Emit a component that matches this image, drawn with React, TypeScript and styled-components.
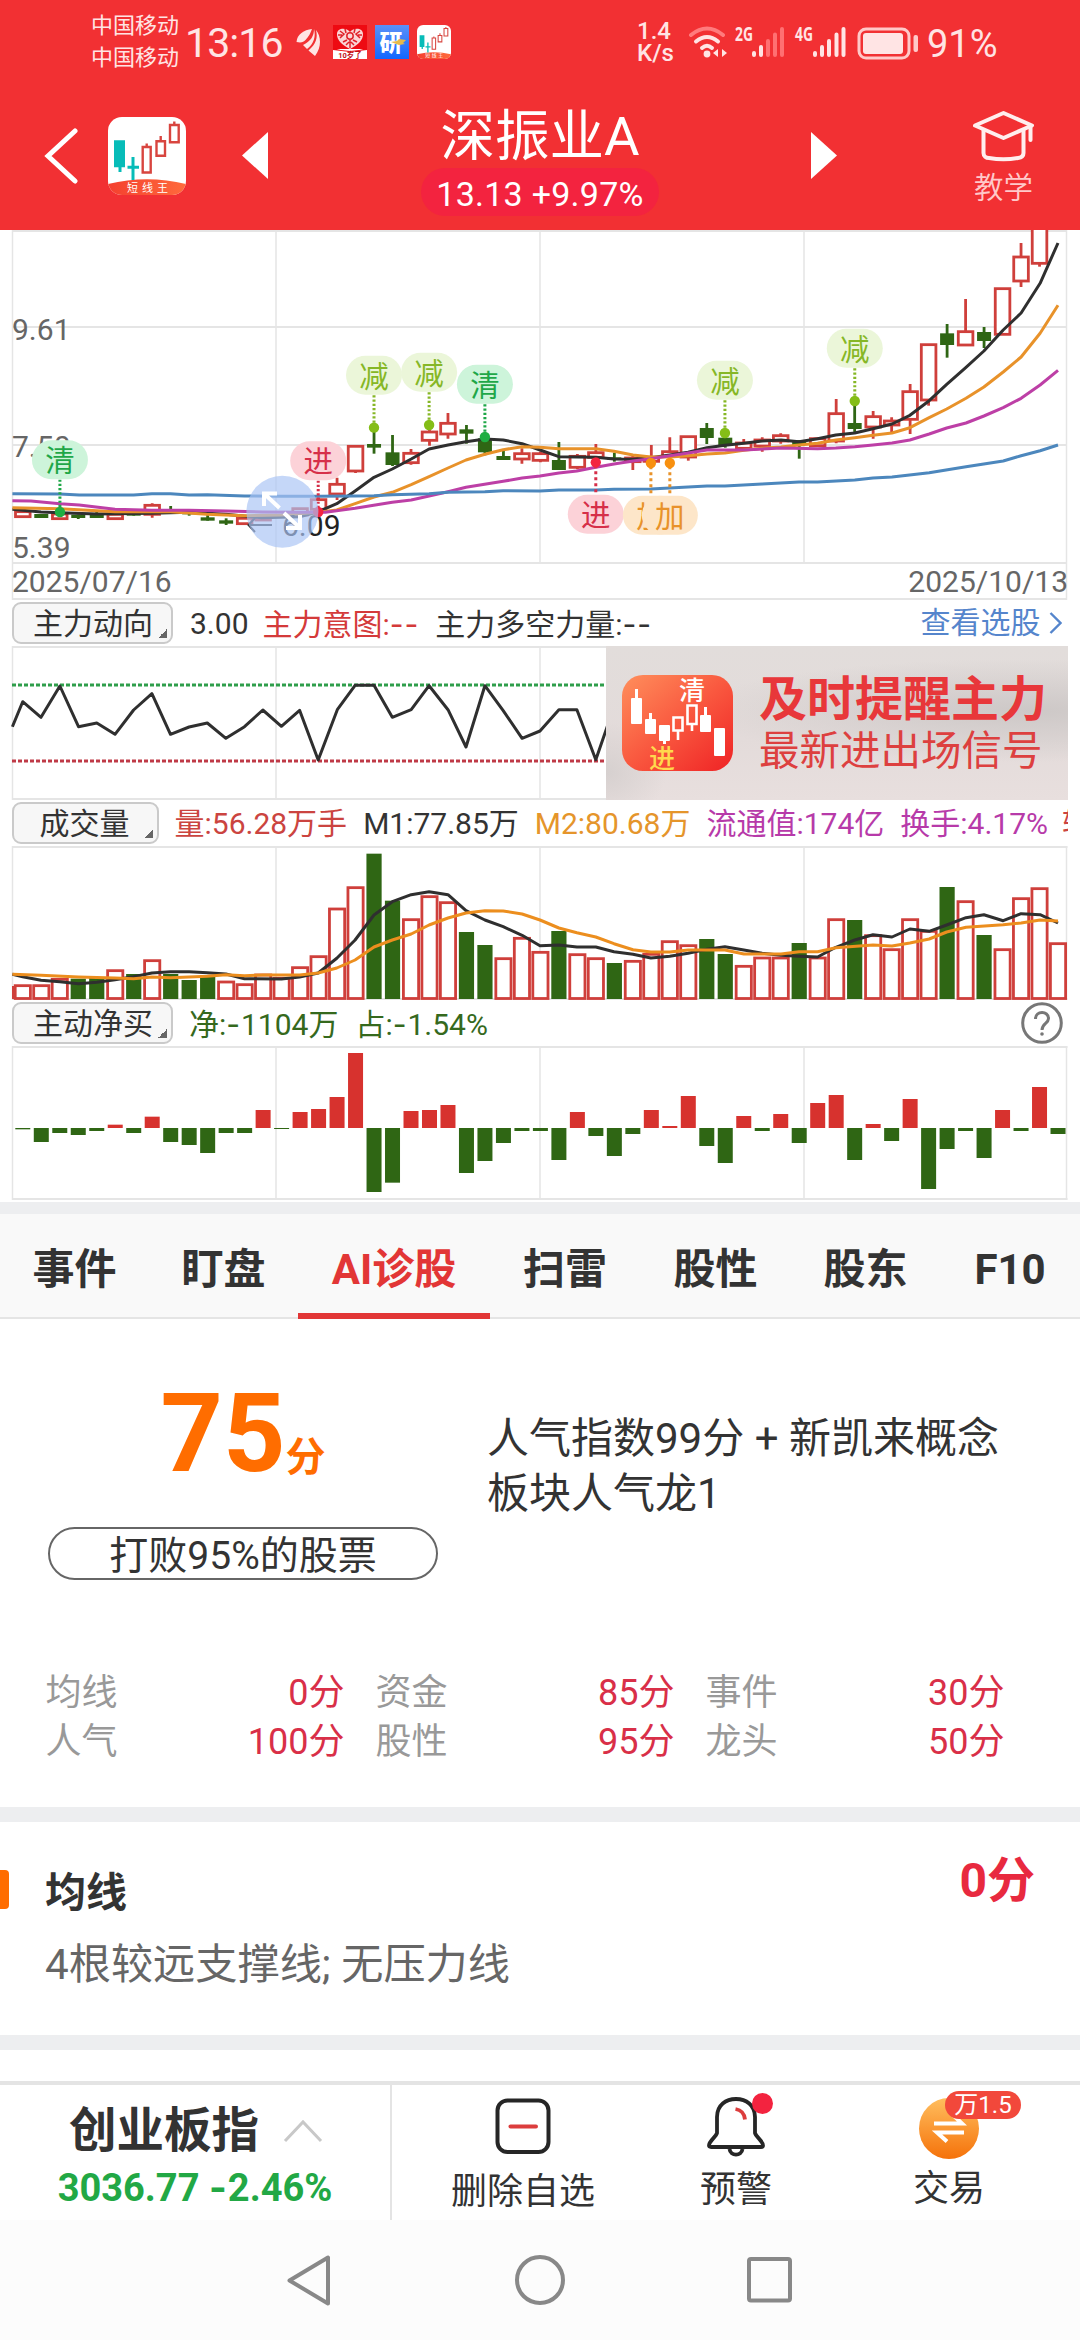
import React from 'react';
import styled, { createGlobalStyle } from 'styled-components';

const FONT = `Roboto, "Noto Sans CJK SC", sans-serif`;
const RED = '#d7322e';
const HOLLOW = '#cf3f3b';
const GREEN = '#2f6614';
const INK = '#333333';
const GRID = '#e5e5e5';

const GlobalStyle = createGlobalStyle`
  * { box-sizing: border-box; }
  html, body { margin: 0; padding: 0; background: #fff; }
  body { font-family: ${FONT}; color: ${INK}; width: 1080px; }
  svg { display: block; flex: none; }
`;

/* ---------- scales ---------- */

const sx = (v: number) => v / 2.9037;
const barX = (i: number) => 22.8 + i * 18.486;
const shift = (offset: number) => (v: number) => v / 3 - offset;
const priceY = shift(5);
const flowY = shift(56);
const volumeY = shift(256);

type Pt = [number, number];
const toPoints = (pts: Pt[], y: (v: number) => number) =>
  pts.map(([a, b]) => `${sx(a).toFixed(1)},${y(b).toFixed(1)}`).join(' ');

/* ---------- data ---------- */

// [colour, wick top, body top, body bottom, wick bottom]
type Candle = ['r' | 'g', number, number, number, number];
const candles: Candle[] = [
  ['r', 860, 860, 875, 875], ['g', 867, 867, 879, 879], ['r', 867, 867, 881, 881], ['g', 869, 869, 879, 882],
  ['g', 858, 866, 879, 879], ['r', 868, 868, 881, 881], ['g', 864, 864, 872, 872], ['r', 835, 841, 868, 878],
  ['g', 843, 857, 862, 862], ['g', 862, 862, 868, 872], ['g', 868, 877, 887, 887], ['g', 880, 886, 896, 900],
  ['r', 880, 880, 896, 896], ['r', 875, 875, 885, 885], ['g', 868, 870, 878, 878], ['r', 850, 851, 870, 870],
  ['r', 818, 824, 853, 862], ['r', 758, 778, 807, 825], ['r', 664, 664, 738, 744], ['g', 620, 657, 668, 686],
  ['g', 630, 682, 720, 723], ['r', 672, 685, 713, 719], ['r', 610, 621, 646, 662], ['r', 564, 595, 627, 641],
  ['g', 600, 613, 626, 656], ['g', 632, 640, 682, 691], ['g', 678, 693, 705, 705], ['r', 670, 686, 702, 716],
  ['r', 680, 686, 706, 712], ['g', 651, 705, 735, 735], ['r', 687, 694, 727, 733], ['r', 657, 683, 697, 705],
  ['g', 683, 697, 705, 710], ['r', 692, 699, 710, 735], ['r', 660, 697, 709, 712], ['r', 637, 680, 694, 700],
  ['r', 635, 635, 696, 707], ['g', 594, 609, 639, 657], ['g', 630, 638, 663, 668], ['r', 642, 654, 670, 675],
  ['r', 637, 645, 663, 680], ['r', 625, 632, 648, 656], ['g', 646, 646, 660, 701], ['r', 637, 641, 662, 662],
  ['r', 522, 566, 648, 655], ['g', 540, 594, 612, 621], ['r', 558, 575, 606, 641], ['r', 577, 588, 600, 622],
  ['r', 477, 500, 583, 627], ['r', 359, 359, 525, 542], ['g', 297, 325, 360, 398], ['r', 222, 320, 360, 360],
  ['g', 306, 321, 348, 369], ['r', 191, 191, 328, 328], ['r', 54, 96, 168, 186], ['r', -20, -20, 115, 125],
];

const ma5: Pt[] = [[36, 853], [119, 861], [174, 863], [281, 867], [441, 865], [549, 862], [656, 868], [760, 878], [870, 875], [924, 860], [978, 836], [1031, 798], [1086, 757], [1139, 732], [1194, 702], [1246, 672], [1301, 660], [1353, 650], [1408, 642], [1461, 645], [1516, 656], [1568, 675], [1623, 695], [1730, 697], [1783, 702], [1838, 703], [1890, 698], [1945, 690], [1998, 682], [2053, 668], [2105, 661], [2160, 655], [2213, 648], [2268, 645], [2320, 650], [2374, 641], [2427, 630], [2482, 624], [2535, 611], [2590, 597], [2642, 571], [2698, 527], [2749, 478], [2805, 427], [2857, 378], [2913, 315], [2965, 264], [3020, 175], [3072, 54]];
const ma10: Pt[] = [[36, 848], [174, 851], [334, 860], [495, 860], [600, 868], [710, 872], [817, 870], [924, 862], [978, 855], [1031, 836], [1086, 816], [1139, 802], [1194, 779], [1246, 755], [1301, 729], [1353, 705], [1408, 688], [1461, 674], [1516, 665], [1568, 667], [1623, 671], [1730, 671], [1783, 679], [1838, 690], [1890, 696], [1945, 696], [1998, 692], [2053, 687], [2105, 684], [2160, 676], [2213, 670], [2268, 666], [2320, 660], [2374, 655], [2427, 645], [2482, 638], [2535, 631], [2590, 624], [2642, 608], [2698, 578], [2749, 552], [2805, 520], [2857, 486], [2913, 441], [2965, 396], [3020, 325], [3072, 241]];
const ma20: Pt[] = [[36, 827], [90, 828], [174, 836], [230, 840], [334, 853], [441, 856], [549, 856], [656, 858], [763, 861], [870, 862], [945, 862], [1031, 850], [1139, 832], [1194, 825], [1246, 813], [1301, 800], [1353, 787], [1461, 769], [1516, 759], [1568, 753], [1623, 744], [1675, 738], [1730, 727], [1783, 717], [1838, 708], [1890, 701], [1945, 692], [1998, 684], [2053, 675], [2160, 675], [2268, 669], [2374, 671], [2427, 669], [2482, 665], [2535, 660], [2590, 654], [2642, 645], [2698, 627], [2749, 609], [2805, 594], [2857, 573], [2913, 548], [2965, 520], [3020, 480], [3072, 436]];
const ma60: Pt[] = [[36, 806], [174, 807], [230, 810], [388, 810], [441, 806], [495, 806], [549, 810], [602, 809], [710, 813], [817, 814], [924, 814], [1031, 813], [1086, 812], [1139, 809], [1246, 806], [1301, 802], [1408, 800], [1461, 797], [1568, 798], [1623, 795], [1730, 795], [1783, 793], [1890, 792], [1998, 786], [2053, 783], [2105, 783], [2213, 777], [2320, 771], [2374, 771], [2482, 765], [2535, 759], [2590, 756], [2698, 743], [2805, 725], [2913, 708], [2965, 692], [3020, 677], [3072, 660]];

const mainForce: Pt[] = [[36, 410], [66, 335], [119, 382], [174, 288], [228, 410], [281, 399], [334, 433], [388, 360], [441, 311], [495, 433], [549, 411], [602, 399], [656, 445], [710, 410], [763, 360], [817, 409], [870, 361], [924, 510], [980, 358], [1031, 286], [1086, 286], [1139, 382], [1194, 359], [1246, 287], [1301, 359], [1353, 471], [1408, 287], [1461, 362], [1516, 445], [1568, 423], [1623, 359], [1675, 359], [1730, 509], [1775, 374]];

const volumes = 'r1187 r1187 r1168 g1166 g1163 r1142 g1152 r1112 g1152 g1170 g1160 r1176 r1184 r1155 r1165 r1133 r1100 r957 r893 g791 g932 r989 r920 r938 g1026 g1065 r1106 r1045 r1087 g1023 r1094 r1106 g1119 r1114 r1093 r1055 r1067 g1047 g1092 r1129 r1104 r1104 g1059 r1104 r989 g990 r1037 r1079 r989 r1024 g891 r935 g1035 r1079 r926 r896 r1061'
  .split(' ').map((s) => ({ up: s[0] === 'r', top: Number(s.slice(1)) }));

const volMa5: Pt[] = [[36, 1153], [66, 1160], [119, 1171], [174, 1175], [228, 1181], [281, 1177], [334, 1169], [388, 1160], [441, 1149], [495, 1145], [549, 1145], [602, 1148], [656, 1152], [710, 1166], [817, 1167], [870, 1161], [924, 1149], [978, 1105], [1031, 1050], [1086, 975], [1139, 935], [1194, 914], [1246, 905], [1301, 914], [1353, 962], [1408, 990], [1461, 1010], [1516, 1036], [1568, 1067], [1623, 1065], [1675, 1071], [1730, 1071], [1783, 1085], [1838, 1093], [1890, 1104], [1945, 1099], [1998, 1090], [2053, 1078], [2105, 1070], [2160, 1080], [2213, 1090], [2268, 1096], [2320, 1099], [2374, 1101], [2427, 1072], [2482, 1050], [2535, 1034], [2590, 1041], [2642, 1017], [2698, 1024], [2749, 1005], [2805, 983], [2857, 974], [2913, 992], [2965, 971], [3020, 974], [3072, 999]];
const volMa10: Pt[] = [[36, 1153], [119, 1156], [228, 1161], [334, 1164], [388, 1166], [441, 1161], [495, 1163], [602, 1159], [656, 1154], [710, 1157], [763, 1155], [870, 1155], [924, 1149], [978, 1134], [1031, 1110], [1086, 1071], [1139, 1050], [1194, 1032], [1246, 1005], [1301, 984], [1353, 969], [1408, 962], [1461, 963], [1516, 972], [1568, 990], [1623, 1014], [1675, 1028], [1730, 1041], [1783, 1061], [1838, 1079], [1890, 1086], [1945, 1086], [1998, 1080], [2105, 1080], [2160, 1092], [2268, 1092], [2320, 1085], [2374, 1085], [2427, 1073], [2535, 1065], [2590, 1068], [2642, 1059], [2698, 1047], [2749, 1026], [2805, 1012], [2913, 1004], [2965, 999], [3020, 990], [3072, 993]];

const netFlows = [418, 456, 429, 435, 423, 404, 429, 380, 456, 465, 489, 429, 429, 360, 417, 366, 357, 321, 189, 606, 578, 363, 360, 345, 549, 513, 459, 423, 423, 510, 366, 438, 498, 432, 360, 408, 318, 468, 519, 378, 423, 372, 459, 339, 315, 510, 402, 453, 327, 597, 477, 423, 504, 360, 423, 291, 432];

type Tone = 'exit' | 'trim' | 'enter' | 'add';
const tones: Record<Tone, { bg: string; fg: string; dot: string }> = {
  exit: { bg: '#cdf4da', fg: '#1fa748', dot: '#1fae42' },
  trim: { bg: '#ebf6d9', fg: '#86b726', dot: '#84bd17' },
  enter: { bg: '#fcd2d8', fg: '#d62f49', dot: '#f3243f' },
  add: { bg: '#fde6c9', fg: '#e8922a', dot: '#f8900f' },
};
const signals: { x: number; pill: number; dot: number; label: string; tone: Tone }[] = [
  { x: 174, pill: 704, dot: 861, label: '清', tone: 'exit' },
  { x: 1086, pill: 451, dot: 608, label: '减', tone: 'trim' },
  { x: 1246, pill: 442, dot: 600, label: '减', tone: 'trim' },
  { x: 1408, pill: 478, dot: 636, label: '清', tone: 'exit' },
  { x: 924, pill: 707, dot: 861, label: '进', tone: 'enter' },
  { x: 2105, pill: 466, dot: 624, label: '减', tone: 'trim' },
  { x: 2482, pill: 370, dot: 528, label: '减', tone: 'trim' },
  { x: 1730, pill: 868, dot: 712, label: '进', tone: 'enter' },
  { x: 1890, pill: 871, dot: 714, label: '加', tone: 'add' },
  { x: 1945, pill: 871, dot: 714, label: '加', tone: 'add' },
];

/* ---------- shared bits ---------- */

const Page = styled.main`
  width: 1080px;
  height: 2340px;
  display: flex;
  flex-direction: column;
  background: #fff;
  overflow: hidden;
`;

const DashMark = styled.span`
  font-family: Inter, ${FONT};
  letter-spacing: 0.03em;
`;

const Dashed = ({ text }: { text: string }) => (
  <>
    {text.split(/(-)/).map((part, i) => (part === '-' ? <DashMark key={i}>-</DashMark> : part))}
  </>
);

const AppLogo = ({ size }: { size: number }) => (
  <svg width={size} height={size} viewBox="0 0 78 78">
    <defs>
      <clipPath id={`logo${size}`}><rect width="78" height="78" rx="14" /></clipPath>
      <linearGradient id={`band${size}`}><stop offset="0" stopColor="#f4402f" /><stop offset="1" stopColor="#ff6a3c" /></linearGradient>
    </defs>
    <g clipPath={`url(#logo${size})`}>
      <rect width="78" height="78" fill="#fff" />
      <path d="M0 67 Q39 57.5 78 67 V78 H0Z" fill={`url(#band${size})`} />
      <path d="M6 23.3h11v27h-3.5v4.7h-3v-4.7H6zM23.5 40h3v8.8H31v3h-4.500V63h-3V51.800h-4v-3h4z" fill="#07bcb8" />
      <g fill="none" stroke="#d8453f" strokeWidth="2.4">
        <path d="M34.700 30h8v25.500h-8zM38.700 26.500v3.500M48.500 24.200h8.500v14.500h-8.500zM52.700 19v5M62 8h8.700v17.200H62zM66.300 4.500V8" />
      </g>
      <text x="39.500" y="74.500" fontSize="11" fill="#fff" textAnchor="middle" letterSpacing="4" fontFamily={FONT} dx="2">短线王</text>
    </g>
  </svg>
);

/* ---------- header ---------- */

const Header = styled.header`
  flex: none;
  height: 230px;
  background: #f23033;
  color: #fff;
`;

const StatusBar = styled.div`
  height: 84px;
  padding: 0 0 0 91px;
  display: flex;
  align-items: center;
  color: #ffe4e4;
`;

const Carriers = styled.div`
  font-size: 22px;
  line-height: 32px;
  width: 94px;
  white-space: nowrap;
`;

const Clock = styled.div`
  font-size: 41px;
  letter-spacing: -0.9px;
  line-height: 48px;
  width: 111px;
  padding-top: 2px;
`;

const AppTray = styled.div`
  display: flex;
  align-items: center;
  gap: 8px;
  margin-left: 11px;
`;

const Spacer = styled.div`
  flex: 1;
`;

const NetSpeed = styled.div`
  width: 51px;
  font-size: 24px;
  line-height: 22px;
  font-weight: 500;
`;

const BatteryText = styled.div`
  width: 154px;
  padding-left: 1px;
  font-size: 38px;
  line-height: 46px;
  padding-top: 3px;
`;

const StatusIcons = () => (
  <svg width="238" height="40" viewBox="688 20 238 40" fill="none" stroke="#ffe4e4" fontFamily={`"Open Sans", sans-serif`}>
    <g strokeWidth="4" strokeLinecap="round">
      <path d="M691 33 Q707 20 723 33" stroke="#ff7b7d" />
      <path d="M696 39.500 Q707 30.500 718 39.500M702 46 Q707 41.500 712 46" />
    </g>
    <circle cx="707" cy="52" r="3.400" fill="#ffe4e4" stroke="none" />
    <path d="M713 51l5-4v8zM727 51l-5-4v8z" fill="#ffe4e4" stroke="none" />
    <g strokeWidth="4" strokeLinecap="round">
      <path d="M754 51v2M761 45v8" />
      <path d="M768 39v14M775 32.500v20.500M782 27v26" stroke="#ff7072" />
      <path d="M815 51v2M822 45v8M829 39v14M836.500 32.500v20.500M843.500 27v26" />
    </g>
    <g fill="#ffe4e4" stroke="none" fontSize="19" fontWeight="700">
      <text x="735" y="39" textLength="18" lengthAdjust="spacingAndGlyphs">2G</text>
      <text x="795" y="39" textLength="18" lengthAdjust="spacingAndGlyphs">4G</text>
    </g>
    <rect x="859" y="27" width="50" height="29" rx="7" strokeWidth="3" stroke="#ffc9c9" />
    <rect x="863" y="31" width="40" height="21" rx="3" fill="#ffe4e4" stroke="none" />
    <rect x="913.500" y="33" width="4.500" height="17" rx="2" fill="#ffc9c9" stroke="none" />
  </svg>
);

const HuaweiMark = () => (
  <svg width="26" height="30" viewBox="0 0 26 30" fill="#ffe4e4">
    <path d="M16 2C8 3 1 7 .5 15c5 1 7 0 9-2 3-3 5-7 6.500-11z" />
    <path d="M18 2c0 7-3 12-11 16l4 4C18 17 20 9 18 2z" />
    <path d="M20 3c2 8 0 14-7.500 20.500L19 29C26 20 25 9 20 3z" />
  </svg>
);

const BadgeHeart = () => (
  <svg width="34" height="34" viewBox="0 0 34 34">
    <rect width="34" height="34" fill="#ee0a12" />
    <rect y="24" width="34" height="10" fill="#fff" />
    <path d="M0 23Q17 29 34 23V25L17 27L0 25z" fill="#ee0a12" />
    <path d="M17 24C8 19 4 15 4 9c0-6 9-7 13-2 4-5 13-4 13 2 0 6-4 10-13 15z" fill="#fbd5d5" />
    <g stroke="#e0222a" strokeWidth="1.500" fill="none">
      <circle cx="17" cy="11" r="3.200" />
      <path d="M7 6l4 3-4 4M27 6l-4 3 4 4M10 17l4-2M24 17l-4-2M12 4l1 4M22 4l-1 4M17 15v8M13 20l3-3M21 20l-3-3M5 10h4M25 10h4" />
    </g>
    <text x="17" y="32.500" fontSize="7.500" fontWeight="700" fill="#c01018" textAnchor="middle" fontFamily={FONT}>10岁了</text>
  </svg>
);

const BadgeResearch = () => (
  <svg width="34" height="34" viewBox="0 0 34 34">
    <defs><linearGradient id="blue" x2="0" y2="1"><stop offset="0" stopColor="#5b90f8" /><stop offset="1" stopColor="#1167ff" /></linearGradient></defs>
    <rect width="34" height="34" fill="url(#blue)" />
    <text x="16" y="25.500" fontSize="23" fontWeight="900" fill="#fff" textAnchor="middle" fontFamily={FONT}>研</text>
    <path d="M16 17l6-1 2-2 7 1-3 3 2 1-6 1z" fill="#e5b94a" />
  </svg>
);

const NavRow = styled.div`
  height: 146px;
  display: grid;
  grid-template-columns: 108px 134px 26px 153px 238px 152px 26px 136px 61px 46px;
  align-items: start;
`;

const BackCell = styled.div`
  padding: 44px 0 0 44px;
`;
const LogoCell = styled.div`
  padding-top: 33px;
`;
const ArrowCell = styled.div`
  grid-column: ${(p: { $col: number }) => p.$col};
  padding-top: 48px;
`;

const TitleCell = styled.div`
  grid-column: 5;
  display: flex;
  flex-direction: column;
  align-items: center;
  padding-top: 20px;
`;

const StockName = styled.h1`
  margin: 0;
  font-size: 54.5px;
  font-weight: 400;
  line-height: 64px;
  white-space: nowrap;
`;

const Quote = styled.div`
  width: 238px;
  height: 48px;
  border-radius: 24px;
  background: #f3233f;
  font-size: 34px;
  letter-spacing: 0.25px;
  line-height: 53px;
  text-align: center;
  white-space: nowrap;
`;

const LearnCell = styled.div`
  grid-column: 9;
  padding-top: 26px;
  display: flex;
  flex-direction: column;
  align-items: center;
  font-size: 29.5px;
  font-weight: 350;
  line-height: 36px;
  gap: 8px;
  color: #ffc9ca;
  white-space: nowrap;
`;

/* ---------- charts ---------- */

const ChartArea = styled.section`
  flex: none;
  height: 972px;
  display: flex;
  flex-direction: column;
`;

const PanelRow = styled.div`
  display: flex;
  height: 154px;
`;

const IndicatorRow = styled.div`
  height: 46px;
  width: 1067.5px;
  padding: 2px 0 2px 12px;
  display: flex;
  align-items: center;
  overflow: hidden;
  white-space: nowrap;
  font-size: 30px;
  line-height: 42px;
`;

const Selector = styled.button`
  flex: none;
  width: ${(p: { $width: number }) => p.$width}px;
  height: 42px;
  padding: 0;
  border: 2px solid #cacaca;
  border-radius: 9px;
  background: #f7f7f7;
  font: 400 30px/40px ${FONT};
  color: ${INK};
  display: flex;
  align-items: flex-end;
  justify-content: flex-end;
`;

const SelectorLabel = styled.span`
  width: ${(p: { $width: number }) => p.$width}px;
  height: 38px;
  text-align: left;
  white-space: nowrap;
`;

const Corner = styled.i`
  width: 9px;
  height: 9px;
  margin: 0 4px 4px 5px;
  background: linear-gradient(135deg, transparent 50%, #666 50%);
`;

const Reading = styled.span`
  margin-left: ${(p: { $gap?: number }) => p.$gap ?? 16}px;
  color: ${(p: { $color?: string }) => p.$color ?? INK};
  padding-top: 2px;
`;

const PickLink = styled.a`
  margin-left: auto;
  color: #5585cc;
  display: flex;
  align-items: center;
  gap: 8px;
  padding-right: 6px;
`;

const HelpIcon = styled.div`
  margin-left: auto;
  margin-right: 5px;
`;

const Grid = ({ width = 1080, height = 154 }: { width?: number; height?: number }) => (
  <g stroke={GRID} strokeWidth="2">
    <path d={`M12 1H${width === 1080 ? 1067.5 : width}M12 ${height - 1}H${width === 1080 ? 1067.5 : width}`} />
    <path d={`M12.500 0V${height}M276 0V${height}M540 0V${height}M804 0V${height}M1066.500 0V${height}`} strokeWidth="1.500" />
  </g>
);

const Line = ({ pts, y, color, w = 3 }: { pts: Pt[]; y: (v: number) => number; color: string; w?: number }) => (
  <polyline points={toPoints(pts, y)} fill="none" stroke={color} strokeWidth={w} strokeLinejoin="round" />
);

const PriceChart = () => (
  <svg width="1080" height="370" fontFamily={FONT} fontSize="30">
    <g stroke={GRID} strokeWidth="2" fill="none">
      <path d="M12 97H1067M12 215H1067M12 333H1067M12 369H1067M12 1H1067" />
      <path d="M12.500 0V370M276 0V333M540 0V333M804 0V333M1066.500 0V370" strokeWidth="1.500" />
    </g>
    <g fill="#666">
      <text x="12" y="110">9.61</text>
      <text x="12" y="227">7.50</text>
      <text x="12" y="327.500">5.39</text>
      <text x="12" y="362">2025/07/16</text>
      <text x="1068" y="362" textAnchor="end">2025/10/13</text>
    </g>
    {candles.map(([c, wt, bt, bb, wb], i) => {
      const x = barX(i);
      const top = priceY(bt);
      const h = Math.max(priceY(bb) - top, 1.5);
      return c === 'r' ? (
        <g key={i} stroke={HOLLOW} strokeWidth="2.800" fill="#fff">
          <path d={`M${x} ${priceY(wt)}V${top}M${x} ${priceY(bb)}V${priceY(wb)}`} />
          <rect x={x - 7.3} y={top} width="14.600" height={h} />
        </g>
      ) : (
        <g key={i} fill={GREEN}>
          <rect x={x - 1.4} y={priceY(wt)} width="2.800" height={priceY(wb) - priceY(wt)} />
          <rect x={x - 7} y={top} width="14" height={h} />
        </g>
      );
    })}
    <Line pts={ma5} y={priceY} color="#2f2f2f" />
    <Line pts={ma10} y={priceY} color="#e8922a" />
    <Line pts={ma20} y={priceY} color="#bd3fa6" />
    <Line pts={ma60} y={priceY} color="#4c87bd" />
    <path d="M272 295H249M255 288L248.500 295L255 302" fill="none" stroke="#333" strokeWidth="2" />
    <text x="282" y="305.500" fill="#222">6.09</text>
    {signals.map((s, i) => {
      const t = tones[s.tone];
      const x = sx(s.x);
      const below = s.pill > s.dot;
      const py = priceY(s.pill);
      const dy = priceY(s.dot);
      return (
        <g key={i}>
          <line x1={x} x2={x} y1={py + (below ? -22 : 20)} y2={dy} stroke={t.fg} strokeWidth="3" strokeDasharray={below ? '3 3' : '2.200 2'} />
          <circle cx={x} cy={dy} r="5.200" fill={t.dot} />
          <rect x={x - 28} y={py - 19.5} width="56" height="39" rx="19.500" fill={t.bg} />
          <text x={x} y={py + 11.5} fill={t.fg} textAnchor="middle" fontSize="29.500">{s.label}</text>
        </g>
      );
    })}
    <circle cx="282.400" cy="281.700" r="36" fill="#a9c4f5" fillOpacity="0.68" />
    <path d="M279.500 278L264 263.500M277 263.500H264V276M284 283L300 298M286 298H300V285" fill="none" stroke="#fff" strokeWidth="4" />
  </svg>
);

const ForceChart = () => (
  <svg width="606" height="154">
    <Grid width={606} />
    <path d="M12 39H604" stroke="#2f9e4b" strokeWidth="2.800" strokeDasharray="4 2" />
    <path d="M12 115H604" stroke="#bf3a47" strokeWidth="2.800" strokeDasharray="4 2" />
    <Line pts={mainForce} y={flowY} color="#2f2f2f" />
  </svg>
);

const VolumeChart = () => (
  <svg width="1080" height="154">
    <Grid />
    <path d="M13 140V153" stroke={HOLLOW} strokeWidth="2" />
    {volumes.map(({ up, top }, i) =>
      up ? (
        <rect key={i} x={barX(i) - 7.6} y={volumeY(top)} width="15.200" height={152.5 - volumeY(top)} fill="#fff" stroke={HOLLOW} strokeWidth="2.800" />
      ) : (
        <rect key={i} x={barX(i) - 7.6} y={volumeY(top)} width="15.200" height={153 - volumeY(top)} fill={GREEN} />
      ),
    )}
    <Line pts={volMa5} y={volumeY} color="#2f2f2f" />
    <Line pts={volMa10} y={volumeY} color="#ec8e1e" />
  </svg>
);

const NetChart = () => (
  <svg width="1080" height="154">
    <Grid />
    {netFlows.map((v, i) => (
      <rect key={i} x={barX(i) - 7.5} width="15" y={Math.min(82, flowY(v))} height={Math.abs(flowY(v) - 82)} fill={v < 414 ? RED : GREEN} />
    ))}
  </svg>
);

/* ---------- banner ---------- */

const Banner = styled.div`
  width: 461.500px;
  height: 154px;
  padding-left: 16px;
  display: flex;
  align-items: center;
  gap: 26px;
  background:
    radial-gradient(ellipse 340px 52px at 92% 42%, #cdc8c7 0%, rgba(205, 200, 199, 0) 100%),
    radial-gradient(ellipse 60px 50px at 0% 82%, #d6d0cf 0%, rgba(214, 208, 207, 0) 100%),
    linear-gradient(#e2dddb, #e3dbda 60%, #e8dfde);
`;

const BannerCopy = styled.div`
  white-space: nowrap;
  color: #e8373a;
`;
const BannerTitle = styled.div`
  font-size: 48px;
  line-height: 56px;
  font-weight: 700;
`;
const BannerText = styled.div`
  font-size: 40.500px;
  line-height: 46px;
  color: #dd403f;
`;

const BannerIcon = () => (
  <svg width="111" height="96" viewBox="0 0 111 96" fontFamily={FONT} fontSize="26" fontWeight="500">
    <defs><linearGradient id="warm" x2="1" y2="1"><stop offset="0" stopColor="#ff8f5c" /><stop offset=".5" stopColor="#f9583f" /><stop offset="1" stopColor="#ef2325" /></linearGradient></defs>
    <rect width="111" height="96" rx="21" fill="url(#warm)" />
    <g fill="#fff">
      <rect x="9" y="23" width="11" height="26" rx="1" /><rect x="13" y="14" width="3" height="10" />
      <rect x="23" y="44" width="11" height="15" rx="1" /><rect x="27" y="38" width="3" height="8" />
      <rect x="37" y="50" width="11" height="16" rx="1" /><rect x="41" y="64" width="3" height="5" />
      <rect x="78" y="40" width="11" height="17" rx="1" /><rect x="82" y="32" width="3" height="10" />
      <rect x="92" y="53" width="11" height="28" rx="1" />
    </g>
    <path d="M51.500 42.500h9v13h-9zM56 56v9M65.500 30.500h9v18.500h-9zM70 49v7" fill="none" stroke="#fff" strokeWidth="2.600" />
    <text x="70" y="24.500" fill="#fff" textAnchor="middle">清</text>
    <text x="40" y="92.500" fill="#ffd84d" textAnchor="middle">进</text>
  </svg>
);

/* ---------- tabs ---------- */

const Strip = styled.div`
  flex: none;
  height: ${(p: { $height: number }) => p.$height}px;
  background: #edeef0;
`;

const Tabs = styled.nav`
  flex: none;
  height: 105px;
  display: flex;
  background: #f9f9f9;
  box-shadow: inset 0 -2px ${GRID};
`;

const Tab = styled.div`
  width: ${(p: { $width: number; $active?: boolean }) => p.$width}px;
  height: 105px;
  font-size: 42px;
  font-weight: 700;
  line-height: 112px;
  text-align: center;
  white-space: nowrap;
  color: ${(p) => (p.$active ? '#e23636' : INK)};
  box-shadow: ${(p) => (p.$active ? 'inset 0 -6px #e23636' : 'none')};
`;

const tabs: { label: string; width: number }[] = [
  { label: '事件', width: 149 },
  { label: '盯盘', width: 149 },
  { label: 'AI诊股', width: 192 },
  { label: '扫雷', width: 150 },
  { label: '股性', width: 151 },
  { label: '股东', width: 149 },
  { label: 'F10', width: 140 },
];

/* ---------- diagnosis ---------- */

const Diagnosis = styled.section`
  flex: none;
  height: 488px;
`;

const Summary = styled.div`
  display: flex;
  height: 347px;
  padding-left: 48px;
`;

const ScoreColumn = styled.div`
  width: 390px;
  padding-top: 55px;
  display: flex;
  flex-direction: column;
  align-items: center;
`;

const Score = styled.div`
  height: 120px;
  color: #ff6d00;
  font-weight: 700;
  font-size: 109px;
  line-height: 120px;
  white-space: nowrap;
`;

const Unit = styled.span`
  font-size: 40px;
`;

const BeatPill = styled.div`
  width: 390px;
  height: 53px;
  margin-top: 33px;
  border: 2px solid #666;
  border-radius: 27px;
  font-size: 39px;
  line-height: 55px;
  text-align: center;
`;

const Verdict = styled.p`
  margin: 92px 0 0 49px;
  font-size: 42px;
  line-height: 55px;
`;

const ScoreGrid = styled.div`
  display: grid;
  grid-template-columns: repeat(3, 299px);
  column-gap: 31px;
  grid-auto-rows: 49px;
  padding-left: 45.5px;
`;

const ScoreItem = styled.div`
  display: flex;
  justify-content: space-between;
  font-size: 36px;
  line-height: 54px;
`;

const ItemName = styled.span`
  color: #999;
`;
const ItemValue = styled.span`
  color: #d92f48;
`;

const scores = [
  ['均线', '0分'], ['资金', '85分'], ['事件', '30分'],
  ['人气', '100分'], ['股性', '95分'], ['龙头', '50分'],
];

const Detail = styled.section`
  flex: none;
  height: 213px;
  padding-top: 27px;
`;

const DetailHead = styled.div`
  display: flex;
  height: 84px;
  padding-right: 45px;
`;

const Accent = styled.i`
  width: 9px;
  height: 39px;
  margin-top: 21px;
  border-radius: 0 4px 4px 0;
  background: #ff6d00;
`;

const DetailTitle = styled.h2`
  margin: 14px 0 0 36px;
  font-size: 41px;
  font-weight: 700;
  line-height: 60px;
`;

const DetailScore = styled.div`
  margin-left: auto;
  font-size: 48px;
  font-weight: 700;
  line-height: 64px;
  color: #e8293f;
`;

const DetailText = styled.p`
  margin: 2px 0 0 45px;
  font-size: 42.2px;
  line-height: 60px;
  color: #666;
`;

const Filler = styled.div`
  flex: none;
  height: 31px;
`;

/* ---------- bottom ---------- */

const ActionBar = styled.footer`
  flex: none;
  height: 139px;
  border-top: 4px solid #e4e4e4;
  display: flex;
`;

const IndexBox = styled.div`
  width: 392px;
  border-right: 2px solid #e4e4e4;
  padding-top: 14px;
  text-align: center;
`;

const IndexName = styled.div`
  display: flex;
  align-items: center;
  padding-left: 69px;
  gap: 24px;
  font-size: 47.500px;
  font-weight: 700;
  line-height: 64px;
`;

const IndexValue = styled.div`
  margin-top: 1px;
  font-size: 38px;
  font-weight: 700;
  line-height: 46px;
  color: #22a845;
  white-space: nowrap;
`;

const Actions = styled.div`
  flex: 1;
  display: grid;
  grid-template-columns: repeat(3, 213px);
  justify-content: center;
`;

const Action = styled.div`
  display: flex;
  flex-direction: column;
  align-items: center;
  font-size: 36px;
  line-height: 48px;
`;

const IconBox = styled.div`
  position: relative;
  height: ${(p: { $height: number }) => p.$height}px;
  padding-top: ${(p: { $height: number; $top: number }) => p.$top}px;
`;

const Dot = styled.i`
  position: absolute;
  top: 8px;
  left: 44.500px;
  width: 21px;
  height: 21px;
  border-radius: 50%;
  background: #f3233f;
`;

const FeeBadge = styled.span`
  position: absolute;
  top: 6px;
  left: 26px;
  width: 76px;
  height: 28px;
  border-radius: 14px;
  background: #f2483b;
  color: #fff;
  font-size: 24px;
  line-height: 29px;
  text-align: center;
`;

const SystemNav = styled.div`
  flex: none;
  height: 120px;
  background: #fcfcfc;
`;

export default function App() {
  return (
    <Page>
      <GlobalStyle />
      <Header>
        <StatusBar>
          <Carriers>
            <div>中国移动</div>
            <div>中国移动</div>
          </Carriers>
          <Clock>13:16</Clock>
          <HuaweiMark />
          <AppTray>
            <BadgeHeart />
            <BadgeResearch />
            <AppLogo size={34} />
          </AppTray>
          <Spacer />
          <NetSpeed>
            <div>1.4</div>
            <div>K/s</div>
          </NetSpeed>
          <StatusIcons />
          <BatteryText>91%</BatteryText>
        </StatusBar>
        <NavRow>
          <BackCell>
            <svg width="34" height="56" viewBox="0 0 34 56"><path d="M31 3L4 28L31 53" fill="none" stroke="#fff" strokeWidth="5" strokeLinecap="round" /></svg>
          </BackCell>
          <LogoCell><AppLogo size={78} /></LogoCell>
          <ArrowCell $col={3}>
            <svg width="26" height="47"><path d="M26 0V47L0 23.500Z" fill="#fff" /></svg>
          </ArrowCell>
          <TitleCell>
            <StockName>深振业A</StockName>
            <Quote>13.13 +9.97%</Quote>
          </TitleCell>
          <ArrowCell $col={7}>
            <svg width="26" height="47"><path d="M0 0V47L26 23.500Z" fill="#fff" /></svg>
          </ArrowCell>
          <LearnCell>
            <svg width="61" height="52" viewBox="0 0 61 52" fill="none" stroke="#ffeeee" strokeWidth="4" strokeLinejoin="round" strokeLinecap="round">
              <path d="M30.500 3L59 15.500L30.500 28L2 15.500Z" />
              <path d="M10.500 20V43C10.500 46 13 48 16 48Q30.500 50.500 45 48C48.500 47.500 50.500 46 50.500 43V20" />
              <path d="M57.500 17V30" />
            </svg>
            <span>教学</span>
          </LearnCell>
        </NavRow>
      </Header>

      <ChartArea>
        <PriceChart />
        <IndicatorRow>
          <Selector $width={161}><SelectorLabel $width={120}>主力动向</SelectorLabel><Corner /></Selector>
          <Reading $gap={17}>3.00</Reading>
          <Reading $gap={14} $color="#d43a3a"><Dashed text="主力意图:--" /></Reading>
          <Reading><Dashed text="主力多空力量:--" /></Reading>
          <PickLink>
            查看选股
            <svg width="13" height="22" viewBox="0 0 13 22"><path d="M1.500 1L11.500 11L1.500 21" fill="none" stroke="#5585cc" strokeWidth="2.400" /></svg>
          </PickLink>
        </IndicatorRow>
        <PanelRow>
          <ForceChart />
          <Banner>
            <BannerIcon />
            <BannerCopy>
              <BannerTitle>及时提醒主力</BannerTitle>
              <BannerText>最新进出场信号</BannerText>
            </BannerCopy>
          </Banner>
        </PanelRow>
        <IndicatorRow>
          <Selector $width={146.5}><SelectorLabel $width={99}>成交量</SelectorLabel><Corner /></Selector>
          <Reading $color="#cb4440">量:56.28万手</Reading>
          <Reading>M1:77.85万</Reading>
          <Reading $color="#e5952b">M2:80.68万</Reading>
          <Reading $color="#b73aa9">流通值:174亿</Reading>
          <Reading $color="#b73aa9">换手:4.17%</Reading>
          <Reading $gap={14} $color="#cb4440">转</Reading>
        </IndicatorRow>
        <VolumeChart />
        <IndicatorRow>
          <Selector $width={161}><SelectorLabel $width={120}>主动净买</SelectorLabel><Corner /></Selector>
          <Reading $color="#35691d"><Dashed text="净:-1104万" /></Reading>
          <Reading $gap={17} $color="#35691d"><Dashed text="占:-1.54%" /></Reading>
          <HelpIcon>
            <svg width="42" height="42" viewBox="0 0 42 42" fill="none" stroke="#777" strokeWidth="3">
              <circle cx="21" cy="21" r="19.300" />
              <path d="M14.500 17C14.500 8.500 27.500 8.500 27.500 16.500C27.500 21.500 21 21.500 21 28" />
              <circle cx="21" cy="32" r="1.800" fill="#777" stroke="none" />
            </svg>
          </HelpIcon>
        </IndicatorRow>
        <NetChart />
      </ChartArea>

      <Strip $height={12} />
      <Tabs>
        {tabs.map((t) => (
          <Tab key={t.label} $width={t.width} $active={t.label === 'AI诊股'}>{t.label}</Tab>
        ))}
      </Tabs>

      <Diagnosis>
        <Summary>
          <ScoreColumn>
            <Score>75<Unit>分</Unit></Score>
            <BeatPill>打败95%的股票</BeatPill>
          </ScoreColumn>
          <Verdict>人气指数99分 + 新凯来概念<br />板块人气龙1</Verdict>
        </Summary>
        <ScoreGrid>
          {scores.map(([name, value]) => (
            <ScoreItem key={name}>
              <ItemName>{name}</ItemName>
              <ItemValue>{value}</ItemValue>
            </ScoreItem>
          ))}
        </ScoreGrid>
      </Diagnosis>

      <Strip $height={15} />
      <Detail>
        <DetailHead>
          <Accent />
          <DetailTitle>均线</DetailTitle>
          <DetailScore>0分</DetailScore>
        </DetailHead>
        <DetailText>4根较远支撑线; 无压力线</DetailText>
      </Detail>
      <Strip $height={15} />
      <Filler />

      <ActionBar>
        <IndexBox>
          <IndexName>
            创业板指
            <svg width="40" height="24" viewBox="0 0 40 24"><path d="M2 22L20 3L38 22" fill="none" stroke="#c8c8c8" strokeWidth="3" /></svg>
          </IndexName>
          <IndexValue><Dashed text="3036.77 -2.46%" /></IndexValue>
        </IndexBox>
        <Actions>
          <Action>
            <IconBox $height={83} $top={12.5}>
              <svg width="56" height="57" viewBox="0 0 56 57" fill="none" strokeWidth="4">
                <rect x="2.500" y="2.500" width="51" height="51.500" rx="10" stroke="#262626" />
                <path d="M15.500 28.500H41" stroke="#dc3d3d" strokeLinecap="round" />
              </svg>
            </IconBox>
            删除自选
          </Action>
          <Action>
            <IconBox $height={81} $top={12}>
              <svg width="58" height="60" viewBox="0 0 58 60" fill="none" stroke="#262626" strokeWidth="3.800" strokeLinejoin="round">
                <path d="M10 36V20C10 8 19 2 29 2S48 8 48 20V36C49 40 56 44 56 48.500C56 49.500 55.500 50 54 50H4C2.500 50 2 49.500 2 48.500C2 44 9 40 10 36Z" />
                <path d="M22.500 52C23.500 59.500 34.500 59.500 35.500 52" />
                <path d="M28.500 12C34 13 37.500 17 38 22.500" stroke="#dc3d3d" />
              </svg>
              <Dot />
            </IconBox>
            预警
          </Action>
          <Action>
            <IconBox $height={80} $top={13}>
              <svg width="60" height="61" viewBox="0 0 60 61">
                <defs><linearGradient id="coin" x2="0" y2="1"><stop offset="0" stopColor="#ffbe5e" /><stop offset="1" stopColor="#f5720a" /></linearGradient></defs>
                <ellipse cx="30" cy="30.500" rx="30" ry="30.500" fill="url(#coin)" />
                <path d="M15 25.500H43L34 17M45 34.500H18L28 43.500" fill="none" stroke="#fff" strokeWidth="4" />
              </svg>
              <FeeBadge>万1.5</FeeBadge>
            </IconBox>
            交易
          </Action>
        </Actions>
      </ActionBar>

      <SystemNav>
        <svg width="1080" height="120" fill="none" stroke="#888" strokeWidth="4" strokeLinejoin="round">
          <path d="M328 37.500V83.500L289.500 60.500Z" />
          <circle cx="540" cy="60" r="23" />
          <rect x="749" y="39" width="41" height="41.500" rx="2" />
        </svg>
      </SystemNav>
    </Page>
  );
}
